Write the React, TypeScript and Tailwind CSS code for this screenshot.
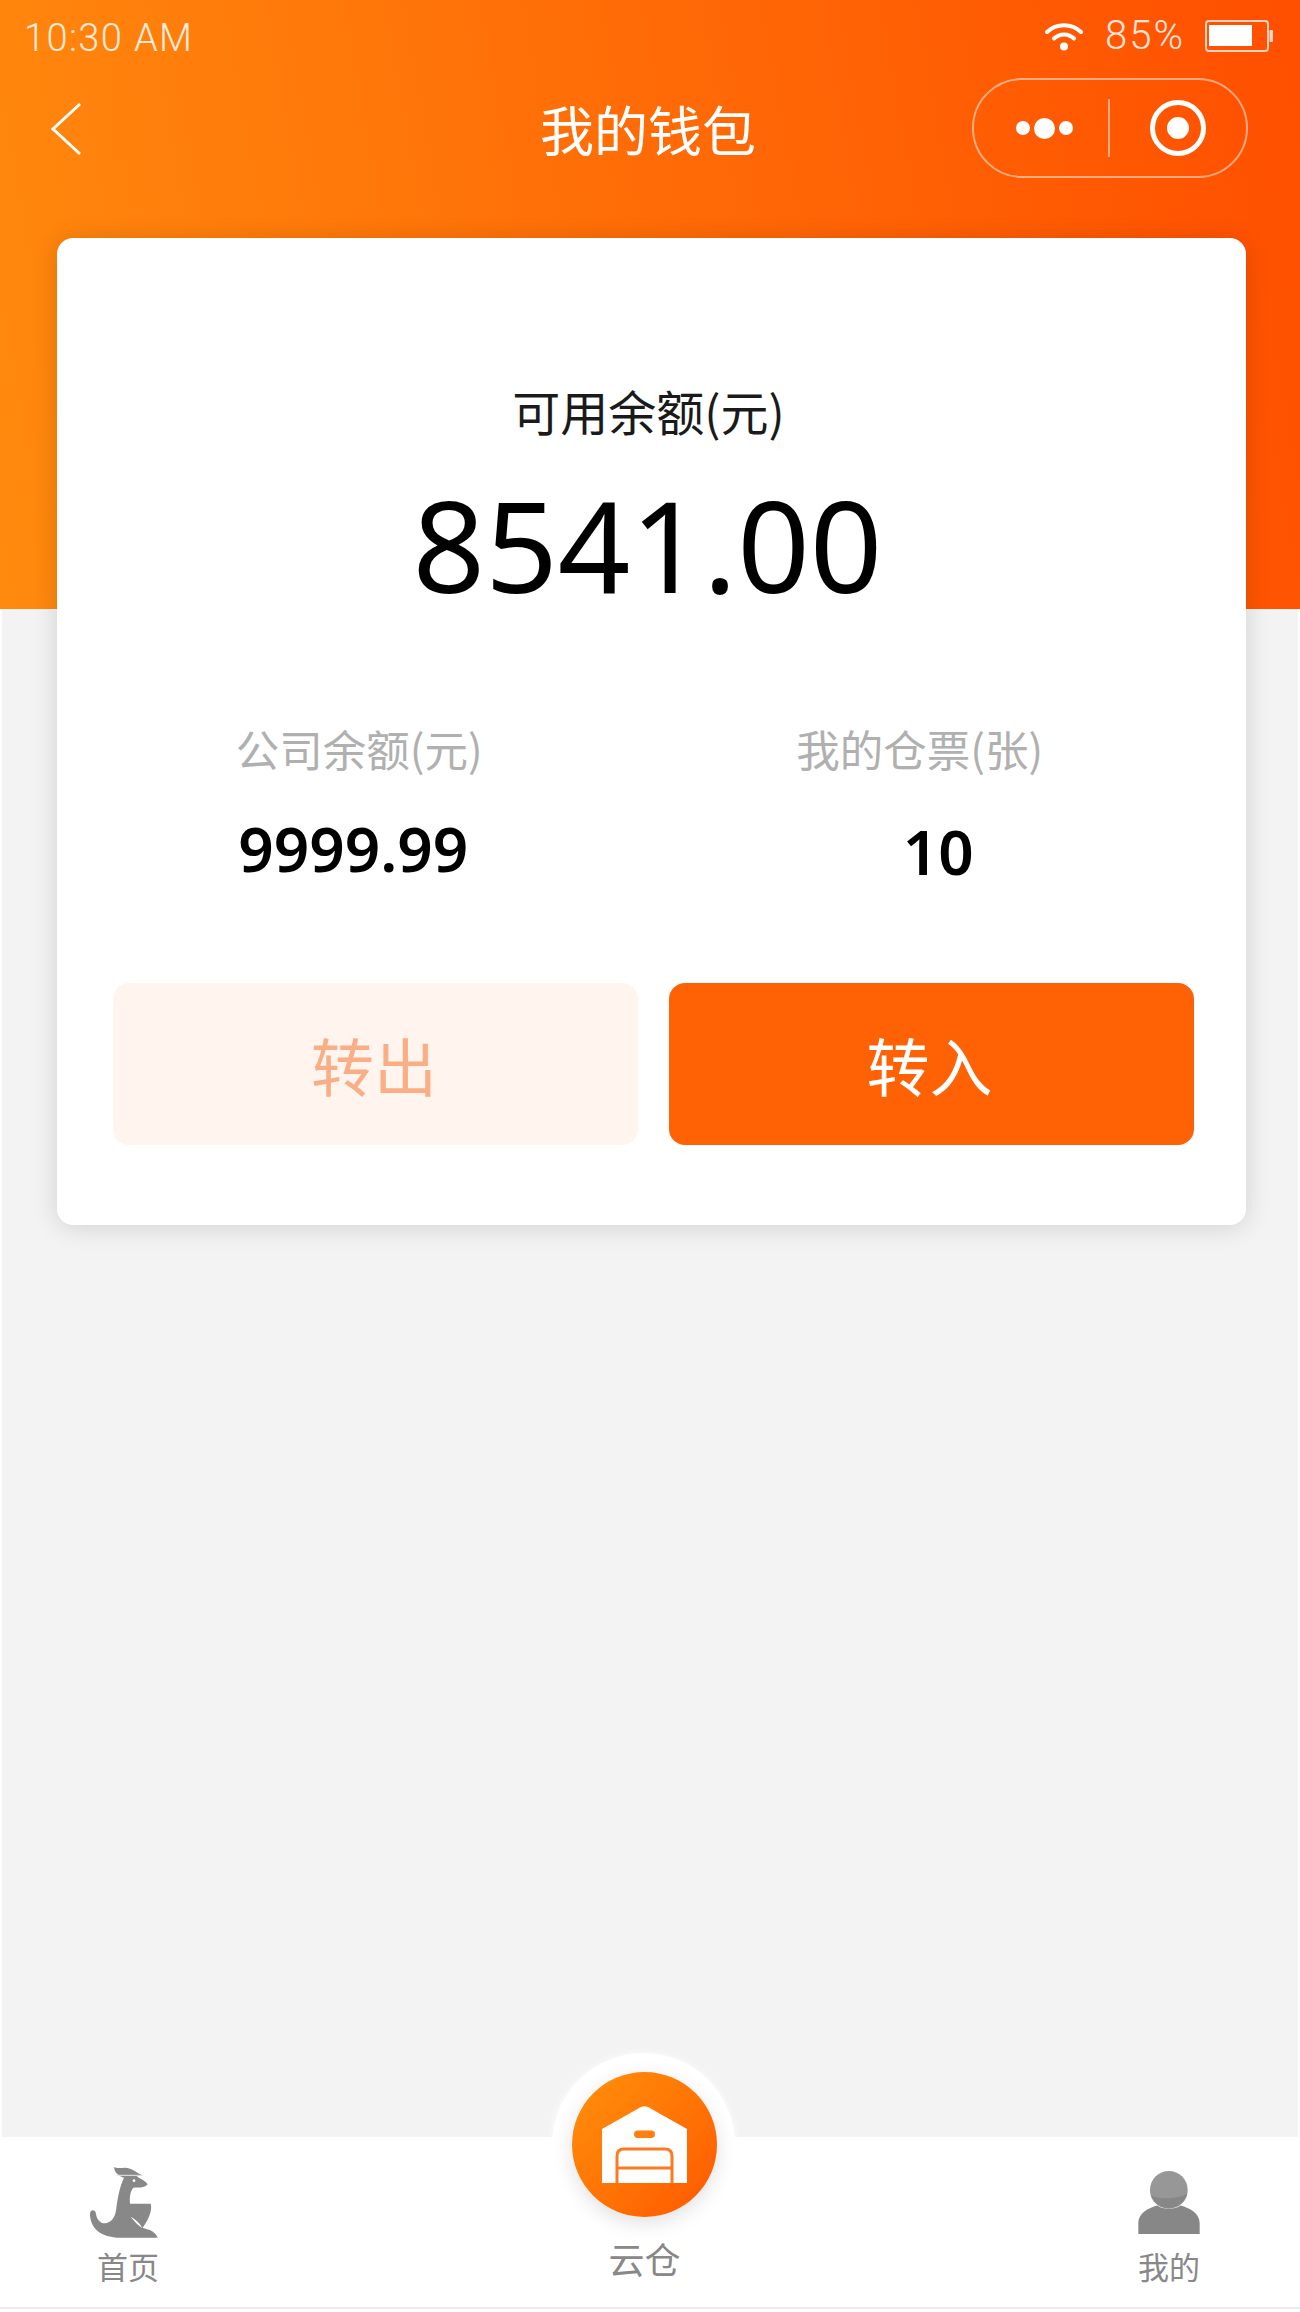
import React from "react";

const cjk = "font-['Noto_Sans_CJK_SC','Noto_Sans',sans-serif]";

function Wifi() {
  return (
    <svg width="38" height="29" viewBox="0 0 38 29" fill="none" stroke="#fff" strokeLinecap="round">
      <path d="M2 10C11.5 1 26.5 1 36 10" strokeWidth="4" />
      <path d="M9 16.5C14.5 11 23.5 11 29 16.5" strokeWidth="4" />
      <circle cx="19" cy="24.5" r="4" fill="#fff" stroke="none" />
    </svg>
  );
}

function Battery() {
  return (
    <svg width="68" height="32" viewBox="0 0 68 32">
      <rect x="1" y="1" width="62" height="30" rx="3" fill="none" stroke="#fff" strokeOpacity="0.75" strokeWidth="2" />
      <rect x="4" y="5" width="43" height="21" fill="#fff" />
      <rect x="64.5" y="10" width="3.5" height="12" rx="1" fill="#fff" fillOpacity="0.75" />
    </svg>
  );
}

function Kangaroo() {
  return (
    <svg width="68" height="71" viewBox="270 380 204 213" fill="#888888">
      <path d="M343 380C355 388 372 378 390 385C402 388 410 398 428 405L410 408C418 415 435 420 443 432C435 442 420 442 400 442C392 450 388 470 390 490L452 490C458 510 445 540 428 562C445 568 465 570 473 592L360 592C320 592 270 575 270 520C270 508 285 505 288 520C290 540 305 552 320 548C335 545 345 530 348 510C352 480 358 440 372 412C360 410 340 395 343 380Z" />
      <path d="M392 530C405 535 418 548 428 564C414 556 404 544 392 530Z" fill="#fff" />
      <path d="M350 405H425" stroke="#e8e8e8" strokeWidth="3" fill="none" />
      <circle cx="402" cy="421" r="4" fill="#fff" />
    </svg>
  );
}

function Person() {
  return (
    <svg width="62" height="63" viewBox="265 213 185 190">
      <circle cx="357" cy="270" r="57" fill="#979797" />
      <path d="M303 286C325 300 380 298 412 282A57 57 0 0 1 303 286Z" fill="#878787" />
      <path d="M265 403V370C265 340 295 325 322 317C340 330 375 330 392 317C420 325 450 340 450 370V403Z" fill="#878787" />
    </svg>
  );
}

function Warehouse() {
  return (
    <svg width="85" height="77" viewBox="0 0 85 77">
      <path d="M0 23L38.5 1.2C41 0 44 0 46.5 1.2L85 23V77H0Z" fill="#fff" />
      <rect x="32" y="24.5" width="21" height="7.5" rx="3.75" fill="#ff7f11" />
      <path d="M15 77V50C15 45 18 43 22 43H63C67 43 70 45 70 50V77" fill="none" stroke="#fb7a22" strokeWidth="3" />
      <path d="M15 62H70" stroke="#fb7a22" strokeWidth="3" />
    </svg>
  );
}

export default function App() {
  return (
    <div className={`flex h-[2312px] w-[1300px] flex-col overflow-hidden bg-white ${cjk}`}>
      <header className="h-[609px] shrink-0 bg-[linear-gradient(80deg,#ff8a0e,#ff4f00)] text-white">
        <div className="mb-[4px] flex h-[72px] items-center justify-between pl-[24px] pr-[27px]">
          <span className="mt-[4px] font-['Roboto',sans-serif] text-[38px] font-light tracking-[1.4px] opacity-85">10:30 AM</span>
          <div className="flex items-center">
            <Wifi />
            <span className="ml-[22px] mr-[20px] font-['Roboto',sans-serif] text-[40px] font-light tracking-[2px] opacity-85">85%</span>
            <Battery />
          </div>
        </div>
        <div className="relative flex h-[102px] items-center justify-center pr-[4px] pt-[4px]">
          <svg className="absolute left-[49px] top-[26px]" width="34" height="54" viewBox="0 0 34 54" fill="none" stroke="#fff" strokeWidth="3">
            <path d="M31 2L4 27L31 52" />
          </svg>
          <h1 className="text-[54px] leading-none font-normal">我的钱包</h1>
          <div className="absolute right-[52px] top-[2px] flex h-[100px] w-[276px] items-center rounded-full border-2 border-white/50">
            <div className="flex w-[134px] items-center justify-center gap-[4px] pl-[7px]">
              <span className="h-[14px] w-[14px] rounded-full bg-white" />
              <span className="h-[21px] w-[21px] rounded-full bg-white" />
              <span className="h-[14px] w-[14px] rounded-full bg-white" />
            </div>
            <div className="h-[58px] w-[2px] bg-white/50" />
            <div className="flex flex-1 items-center justify-center">
              <div className="flex h-[56px] w-[56px] items-center justify-center rounded-full border-[5px] border-white">
                <span className="h-[22px] w-[22px] rounded-full bg-white" />
              </div>
            </div>
          </div>
        </div>
      </header>

      <div className="mx-[2px] flex-1 bg-[#f3f3f3]">
        <main className="relative ml-[55px] mt-[-371px] h-[987px] w-[1189px] rounded-[16px] bg-white pl-[56px] pr-[52px] pt-[140px] shadow-[0_2px_26px_rgba(0,0,0,0.14)]">
          <p className="pr-[10px] text-center text-[48px] leading-[64px] text-[#1a1a1a]">可用余额(元)</p>
          <p className="mt-[32px] pr-[12px] text-center font-['Noto_Sans',sans-serif] text-[127px] leading-[140px] text-black">8541.00</p>
          <div className="mt-[106px] grid grid-cols-2">
            <div className="text-center">
              <p className="pr-[48px] text-[43.5px] leading-[58px] text-[#b0b0b0]">公司余额(元)</p>
              <p className="mt-[35px] pr-[60px] font-['Noto_Sans',sans-serif] text-[62px] leading-[70px] font-semibold text-black">9999.99</p>
            </div>
            <div className="text-center">
              <p className="pr-[8px] text-[43.5px] leading-[58px] text-[#b0b0b0]">我的仓票(张)</p>
              <p className="mt-[38px] pl-[29px] font-['Noto_Sans',sans-serif] text-[62px] leading-[70px] font-semibold text-black">10</p>
            </div>
          </div>
          <div className="mt-[97px] grid grid-cols-2 gap-[31px]">
            <button className="h-[162px] rounded-[16px] bg-[#fff5ee] pr-[3px] text-[63px] text-[#f9ae85]">转出</button>
            <button className="h-[162px] rounded-[16px] bg-[#ff6105] pr-[4px] text-[63px] text-white">转入</button>
          </div>
        </main>
      </div>

      <nav className="relative mb-[3px] h-[172px] shrink-0 border-b-2 border-[#ececec] bg-white">
        <div className="absolute left-[552px] top-[-84px] h-[183px] w-[183px] rounded-full bg-white shadow-[0_0_8px_rgba(255,255,255,0.8)]" />
        <div className="absolute left-0 right-0 top-0 h-[100px] bg-white" />
        <div className="absolute left-[69px] top-[30px] flex w-[118px] flex-col items-center">
          <span className="mr-[8px] block h-[71px]"><Kangaroo /></span>
          <span className="mt-[8px] text-[31px] leading-[40px] text-[#888]">首页</span>
        </div>
        <div className="absolute left-[572px] top-[-65px] flex w-[145px] flex-col items-center">
          <div className="flex h-[145px] w-[145px] items-center justify-center rounded-full bg-gradient-to-br from-[#ff900c] to-[#ff5600] shadow-[0_6px_20px_rgba(0,0,0,0.12)]">
            <Warehouse />
          </div>
          <span className="mt-[19px] text-[36px] leading-[44px] text-[#888]">云仓</span>
        </div>
        <div className="absolute left-[1109px] top-[34px] flex w-[120px] flex-col items-center">
          <span className="block h-[63px]"><Person /></span>
          <span className="mt-[12px] text-[31px] leading-[40px] text-[#888]">我的</span>
        </div>
      </nav>
    </div>
  );
}
